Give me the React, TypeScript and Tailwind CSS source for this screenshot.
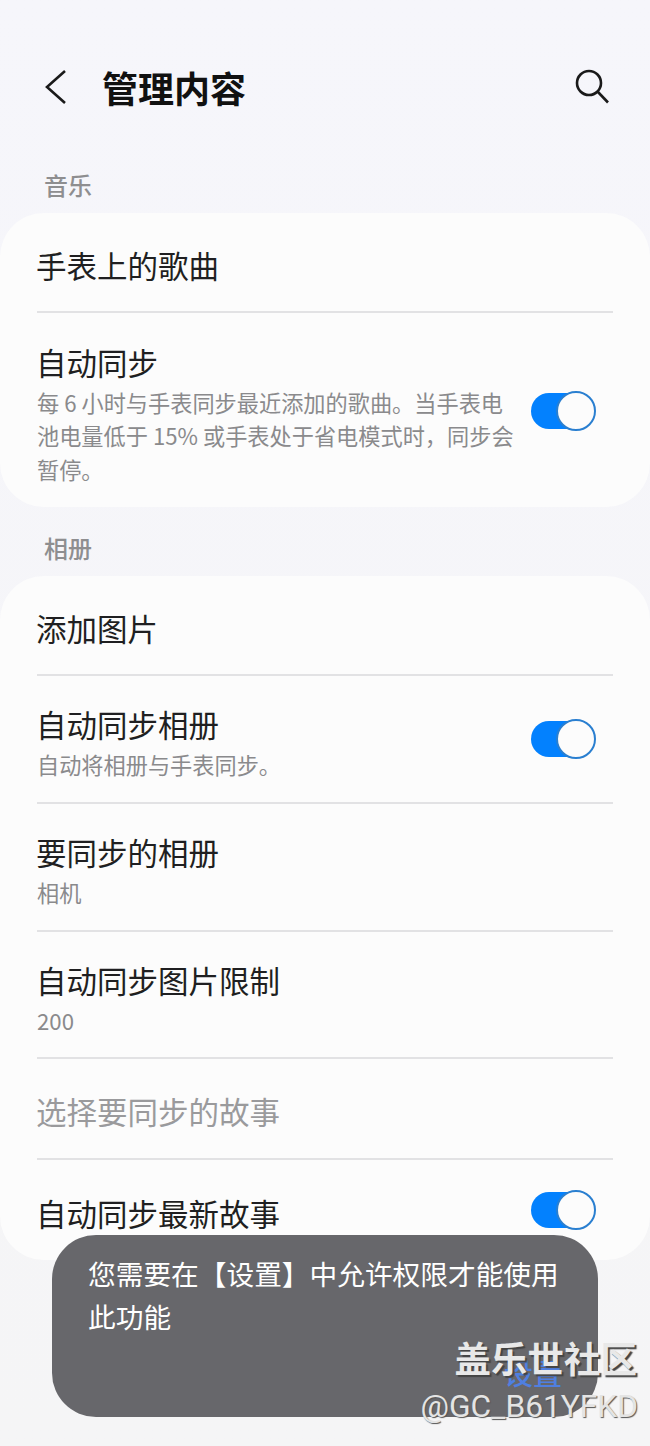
const cjk = "font-['Noto_Sans_CJK_SC','Noto_Sans',sans-serif]";

function Toggle() {
  return (
    <div className="relative h-10 w-[65px] shrink-0">
      <div className="absolute left-0 top-[2px] h-9 w-[60px] rounded-full bg-[#0381fe]" />
      <div className="absolute right-0 top-0 h-10 w-10 rounded-full border-2 border-[#2a7fd0] bg-[#fcfcfc]" />
    </div>
  );
}

function Divider() {
  return <div className="mx-[37px] h-[2px] bg-[#e2e2e4]" />;
}

function Row({
  title,
  sub,
  height,
  disabled,
}: {
  title: string;
  sub?: string;
  height: string;
  disabled?: boolean;
}) {
  return (
    <div className={`flex flex-col justify-center px-[36px] ${sub ? "pt-[7px]" : "pt-[5px]"} ${height}`}>
      <div
        className={`text-[30.5px] leading-10 ${
          disabled ? "text-[#9a9a9c]" : "text-[#1f1f21]"
        }`}
      >
        {title}
      </div>
      {sub && (
        <div className="mt-[4px] pl-px text-[22.2px] leading-[33px] text-[#8a8a8c]">
          {sub}
        </div>
      )}
    </div>
  );
}

function ToggleRow({
  title,
  sub,
  height,
}: {
  title: string;
  sub?: string;
  height: string;
}) {
  return (
    <div className={`flex items-center justify-between pl-[36px] pr-[54px] ${height}`}>
      <div className={`w-[484px] ${sub ? "pt-[7px]" : "pt-[5px]"}`}>
        <div className="text-[30.5px] leading-10 text-[#1f1f21]">{title}</div>
        {sub && (
          <div className="mt-[4px] pl-px text-[22.2px] leading-[33.5px] text-[#8a8a8c]">
            {sub}
          </div>
        )}
      </div>
      <Toggle />
    </div>
  );
}

export default function App() {
  return (
    <div
      className={`relative h-[1446px] w-[650px] overflow-hidden bg-gradient-to-b from-[#f6f6fb] to-[#f5f5f6] ${cjk}`}
    >
      {/* Header */}
      <div className="flex h-[172px] w-full items-start pt-[62px]">
        <svg viewBox="0 0 24 36" className="ml-[44px] mt-[7px] h-9 w-6 text-[#1a1a1a]" fill="none" stroke="currentColor" strokeWidth="2.6">
          <path d="M21 2 3 18l18 16" />
        </svg>
        <h1 className="ml-[34px] text-[36px] font-bold leading-[50px] text-[#111]">管理内容</h1>
        <svg viewBox="0 0 40 40" className="ml-auto mr-[38px] mt-1 h-10 w-10 text-[#1a1a1a]" fill="none" stroke="currentColor" strokeWidth="2.6">
          <circle cx="17" cy="17" r="12" />
          <path d="m25.5 25.5 10.5 11" />
        </svg>
      </div>

      <div className="h-[41px] pl-[44px] text-[24px] font-medium leading-[26px] text-[#8e8e90]">音乐</div>
      <div className="h-[294px] rounded-[44px] bg-[#fcfcfc]">
        <Row title="手表上的歌曲" height="h-[98px]" />
        <Divider />
        <ToggleRow
          title="自动同步"
          sub="每 6 小时与手表同步最近添加的歌曲。当手表电池电量低于 15% 或手表处于省电模式时，同步会暂停。"
          height="h-[195px]"
        />
      </div>

      <div className="flex h-[69px] items-end pb-[15px] pl-[44px] text-[24px] font-medium leading-[26px] text-[#8e8e90]">相册</div>
      <div className="h-[684px] rounded-[44px] bg-[#fcfcfc]">
        <Row title="添加图片" height="h-[98px]" />
        <Divider />
        <ToggleRow title="自动同步相册" sub="自动将相册与手表同步。" height="h-[126px]" />
        <Divider />
        <Row title="要同步的相册" sub="相机" height="h-[126px]" />
        <Divider />
        <Row title="自动同步图片限制" sub="200" height="h-[125px]" />
        <Divider />
        <Row title="选择要同步的故事" height="h-[99px]" disabled />
        <Divider />
        <ToggleRow title="自动同步最新故事" height="h-[100px]" />
      </div>

      {/* Toast */}
      <div className="absolute left-[52px] top-[1235px] h-[182px] w-[546px] rounded-[44px] bg-[#67676b] px-9 pt-[17px] text-[27.7px] leading-[43px] text-white">
        <p>您需要在【设置】中允许权限才能使用此功能</p>
        <span className="absolute right-[36px] top-[116px] text-[29px] font-medium leading-[43px] text-[#4f7fe0]">设置</span>
      </div>

      {/* Watermark */}
      <div className="absolute right-[13px] top-[1336px] text-[36.5px] font-bold leading-[44px] text-[#e8e8e8] [text-shadow:2px_2px_1px_#444]">
        盖乐世社区
      </div>
      <div className="absolute right-[12px] top-[1387px] font-['Roboto',sans-serif] text-[31.7px] leading-10 text-[#e4e4e4] [text-shadow:1px_1px_1px_#555]">
        @GC_B61YFKD
      </div>
    </div>
  );
}
